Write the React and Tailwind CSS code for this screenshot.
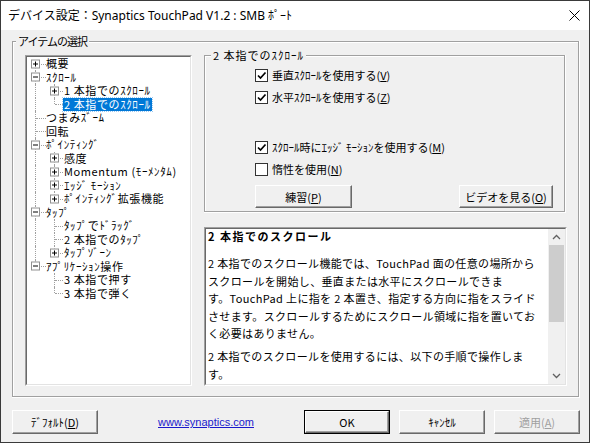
import React from 'react';

const UI = "font-['Noto_Sans_CJK_JP',sans-serif]";

const TREE = [
  { label: '概要', level: 0, box: '+' },
  { label: 'ｽｸﾛｰﾙ', level: 0, box: '-' },
  { label: '1 本指でのｽｸﾛｰﾙ', level: 1, box: '+' },
  { label: '2 本指でのｽｸﾛｰﾙ', level: 1, last: true, selected: true },
  { label: 'つまみｽﾞｰﾑ', level: 0 },
  { label: '回転', level: 0 },
  { label: 'ﾎﾟｲﾝﾃｨﾝｸﾞ', level: 0, box: '-' },
  { label: '感度', level: 1, box: '+' },
  { label: 'Momentum (ﾓｰﾒﾝﾀﾑ)', level: 1, box: '+' },
  { label: 'ｴｯｼﾞ ﾓｰｼｮﾝ', level: 1, box: '+' },
  { label: 'ﾎﾟｲﾝﾃｨﾝｸﾞ拡張機能', level: 1, box: '+', last: true },
  { label: 'ﾀｯﾌﾟ', level: 0, box: '-' },
  { label: 'ﾀｯﾌﾟでﾄﾞﾗｯｸﾞ', level: 1 },
  { label: '2 本指でのﾀｯﾌﾟ', level: 1 },
  { label: 'ﾀｯﾌﾟｿﾞｰﾝ', level: 1, box: '+', last: true },
  { label: 'ｱﾌﾟﾘｹｰｼｮﾝ操作', level: 0, box: '-', lastRoot: true },
  { label: '3 本指で押す', level: 1, underLast: true },
  { label: '3 本指で弾く', level: 1, underLast: true, last: true },
];

const DOT_V = 'absolute w-0 border-l border-dotted border-[#a0a0a0]';
const DOT_H = 'absolute h-0 top-1/2 right-0 border-t border-dotted border-[#a0a0a0]';

const Expander = ({ kind, left }) => (
  <div className={`absolute top-1/2 -translate-y-1/2 ${left} w-[9px] h-[9px] border border-[#919191] bg-white flex items-center justify-center`}>
    <svg width="7" height="7" viewBox="0 0 7 7">
      <path d="M1 3.5H6" stroke="#000" strokeWidth="1" />
      {kind === '+' && <path d="M3.5 1V6" stroke="#000" strokeWidth="1" />}
    </svg>
  </div>
);

const TreeRow = ({ item, first }) => {
  const { level, box, last, lastRoot, underLast, selected, label } = item;
  return (
    <div className="flex h-[13.5px] items-center">
      <div className="relative w-[19px] h-full shrink-0">
        {level === 0 ? (
          <>
            <div className={`${DOT_V} left-[8px] ${first ? 'top-1/2' : 'top-0'} ${lastRoot ? 'bottom-1/2' : 'bottom-0'}`} />
            <div className={`${DOT_H} left-[9px]`} />
            {box && <Expander kind={box} left="left-[4px]" />}
          </>
        ) : (
          !underLast && <div className={`${DOT_V} left-[8px] top-0 bottom-0`} />
        )}
      </div>
      {level === 1 && (
        <div className="relative w-[17px] h-full shrink-0">
          <div className={`${DOT_V} left-[8px] top-0 ${last ? 'bottom-1/2' : 'bottom-0'}`} />
          <div className={`${DOT_H} left-[9px]`} />
          {box && <Expander kind={box} left="left-[4px]" />}
        </div>
      )}
      <div
        className={`block whitespace-nowrap text-[11px] leading-[13px] tracking-[0.6px] px-[1px] ${level === 0 ? 'ml-[-1px]' : ''} ${
          selected ? 'bg-[#0078d7] text-white outline outline-1 outline-dotted outline-[#9cc9f0]' : 'text-black'
        }`}
      >
        {label}
      </div>
    </div>
  );
};

const Group = ({ title, className, titleClass = '', children }) => (
  <div className={`border-r border-b border-white ${className}`}>
    <div className="h-full border border-[#a0a0a0]">
      <div className="h-full border-t border-l border-white flex flex-col">
        <div className={`-mt-[10px] w-fit bg-[#f0f0f0] px-[2px] text-[11px] leading-[16px] whitespace-nowrap ${titleClass}`}>
          {title}
        </div>
        {children}
      </div>
    </div>
  </div>
);

const Check = ({ checked, children }) => (
  <div className="flex h-[18px] items-center gap-[4px] pl-[49px]">
    <div className="w-[13px] h-[13px] border border-[#333] bg-white flex items-center justify-center">
      {checked && (
        <svg width="11" height="11" viewBox="0 0 11 11">
          <path d="M2 5.5L4.5 8L9.5 2.5" fill="none" stroke="#000" strokeWidth="1.7" />
        </svg>
      )}
    </div>
    <span className="text-[11px] leading-[14px] whitespace-nowrap">{children}</span>
  </div>
);

const Btn = ({ className = '', disabled, children }) => (
  <div
    className={`h-full flex items-center justify-center border border-t-white border-l-white border-r-[#696969] border-b-[#696969] shadow-[inset_-1px_-1px_0_#a0a0a0] bg-[#f0f0f0] text-[11px] leading-[14px] whitespace-nowrap ${
      disabled ? 'text-[#a0a0a0]' : 'text-black'
    } ${className}`}
  >
    {children}
  </div>
);

const HELP = [
  '2 本指でのスクロール機能では、TouchPad 面の任意の場所から',
  'スクロールを開始し、垂直または水平にスクロールできま',
  'す。TouchPad 上に指を 2 本置き、指定する方向に指をスライド',
  'させます。スクロールするためにスクロール領域に指を置いてお',
  'く必要はありません。',
];

export default function App() {
  return (
    <div className={`w-[590px] h-[443px] bg-[#f0f0f0] border border-[#3a3a3a] flex flex-col overflow-hidden text-black ${UI}`}>
      {/* title bar */}
      <div className="h-[29px] shrink-0 bg-white flex items-center pl-[7px] pr-[9px]">
        <span className="text-[12px] leading-[16px] whitespace-nowrap font-['Noto_Sans','Noto_Sans_CJK_JP',sans-serif]">
          デバイス設定：Synaptics TouchPad V1.2 : SMB ﾎﾟｰﾄ
        </span>
        <svg className="ml-auto" width="11" height="11" viewBox="0 0 11 11">
          <path d="M0.5 0.5L10.5 10.5M10.5 0.5L0.5 10.5" stroke="#000" strokeWidth="1" />
        </svg>
      </div>

      <div className="pl-[11px] pt-[11px]">
        <Group title="アイテムの選択" className="w-[568px] h-[357px]" titleClass="ml-[2px] tracking-[-1px]">
          <div className="flex mt-[6px] ml-[11px] gap-[12px]">
            {/* tree */}
            <div className="w-[167px] h-[331px] border border-t-[#a0a0a0] border-l-[#a0a0a0] border-r-white border-b-white">
              <div className="h-full border border-t-[#696969] border-l-[#696969] border-r-[#e3e3e3] border-b-[#e3e3e3] bg-white">
                {TREE.map((item, i) => (
                  <TreeRow key={i} item={item} first={i === 0} />
                ))}
              </div>
            </div>

            {/* right column */}
            <div className="w-[362px] flex flex-col">
              <Group title="2 本指でのｽｸﾛｰﾙ" className="h-[158px]" titleClass="ml-[5px] tracking-[1px]">
                <div className="mt-[3px]">
                  <Check checked>
                    垂直ｽｸﾛｰﾙを使用する(<u>V</u>)
                  </Check>
                </div>
                <div className="mt-[4px]">
                  <Check checked>
                    水平ｽｸﾛｰﾙを使用する(<u>Z</u>)
                  </Check>
                </div>
                <div className="mt-[32px]">
                  <Check checked>
                    ｽｸﾛｰﾙ時にｴｯｼﾞ ﾓｰｼｮﾝを使用する(<u>M</u>)
                  </Check>
                </div>
                <div className="mt-[4px]">
                  <Check>
                    惰性を使用(<u>N</u>)
                  </Check>
                </div>
                <div className="flex h-[23px] mt-[7px] pl-[49px] pr-[11px]">
                  <Btn className="w-[97px]">
                    練習(<u>P</u>)
                  </Btn>
                  <Btn className="w-[94px] ml-auto">
                    ビデオを見る(<u>O</u>)
                  </Btn>
                </div>
              </Group>

              {/* help text */}
              <div className="mt-[14px] w-[363px] h-[159px] border border-t-[#a0a0a0] border-l-[#a0a0a0] border-r-white border-b-white">
                <div className="h-full flex border border-t-[#696969] border-l-[#696969] border-r-[#e3e3e3] border-b-[#e3e3e3] bg-white">
                  <div className="flex-1 pl-[2px] overflow-hidden">
                    <div className="font-bold text-[11px] leading-[14px] tracking-[1.5px] whitespace-nowrap">2 本指でのスクロール</div>
                    <div className="mt-[12px]">
                      {HELP.map((line, i) => (
                        <div key={i} className="text-[11px] leading-[17.5px] tracking-[0.35px] whitespace-nowrap">
                          {line}
                        </div>
                      ))}
                    </div>
                    <div className="mt-[5.5px]">
                      <div className="text-[11px] leading-[17.5px] tracking-[0.35px] whitespace-nowrap">
                        2 本指でのスクロールを使用するには、以下の手順で操作しま
                      </div>
                      <div className="text-[11px] leading-[17.5px] tracking-[0.35px] whitespace-nowrap">す。</div>
                    </div>
                  </div>
                  <div className="w-[17px] shrink-0 bg-[#f0f0f0] flex flex-col">
                    <div className="h-[16px] flex items-center justify-center">
                      <svg width="9" height="6" viewBox="0 0 9 6">
                        <path d="M1 5L4.5 1.5L8 5" fill="none" stroke="#606060" strokeWidth="1.3" />
                      </svg>
                    </div>
                    <div className="h-[77px] mx-[1px] bg-[#cdcdcd]" />
                    <div className="flex-1" />
                    <div className="h-[17px] flex items-center justify-center">
                      <svg width="9" height="6" viewBox="0 0 9 6">
                        <path d="M1 1L4.5 4.5L8 1" fill="none" stroke="#606060" strokeWidth="1.3" />
                      </svg>
                    </div>
                  </div>
                </div>
              </div>
            </div>
          </div>
        </Group>
      </div>

      {/* bottom buttons */}
      <div className="flex h-[24px] mt-[12px] items-center pl-[11px] pr-[9px]">
        <Btn className="w-[86px]">
          ﾃﾞﾌｫﾙﾄ(<u>D</u>)
        </Btn>
        <a className="ml-[60px] text-[11px] leading-[14px] text-[#1a1acc] underline font-['Liberation_Sans',sans-serif]">
          www.synaptics.com
        </a>
        <div className="ml-auto flex h-full gap-[9px]">
          <div className="w-[86px] h-full border border-black">
            <Btn>OK</Btn>
          </div>
          <Btn className="w-[86px]">ｷｬﾝｾﾙ</Btn>
          <Btn className="w-[86px]" disabled>
            適用(<u>A</u>)
          </Btn>
        </div>
      </div>
    </div>
  );
}
